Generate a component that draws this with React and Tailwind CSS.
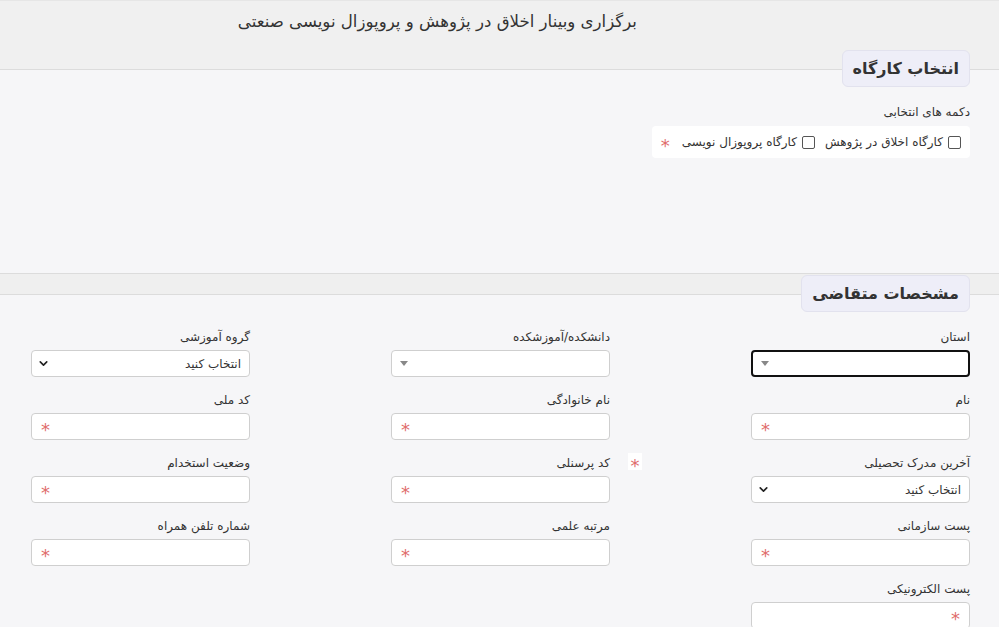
import { FiChevronDown } from 'react-icons/fi'

const Star = ({ className = '' }) => (
  <span className={`text-[#e06c6c] text-[18px] leading-none ${className}`}>*</span>
)

function Field({ label, type = 'text', focused = false, starRight = false, extraStar = false }) {
  return (
    <div className="flex flex-col">
      <div className="relative h-[18px] mb-[4px] text-[12px] leading-[18px] text-[#333]">
        {label}
        {extraStar && (
          <span className="absolute -right-[32px] top-[-1px] w-[14px] h-[17px] bg-white flex items-start justify-center pt-[4px]">
            <Star />
          </span>
        )}
      </div>
      {type === 'text' && (
        <div className={`h-[27px] bg-white border border-[#cfcfcf] rounded-[4px] flex items-center px-[9px] ${starRight ? 'justify-start' : 'justify-end'}`}>
          <Star className="mt-[7px]" />
        </div>
      )}
      {type === 'select' && (
        <div className="h-[27px] bg-white border border-[#cfcfcf] rounded-[4px] flex items-center justify-between pr-[8px] pl-[5px] text-[12px] text-[#333]">
          <span>انتخاب کنید</span>
          <FiChevronDown className="text-[13px] text-[#222]" strokeWidth={3} />
        </div>
      )}
      {type === 'select2' && (
        <div className={`h-[27px] bg-white rounded-[4px] flex items-center justify-end pl-[8px] ${focused ? 'border-2 border-[#111]' : 'border border-[#cfcfcf]'}`}>
          <span className="w-0 h-0 border-x-[4px] border-x-transparent border-t-[5px] border-t-[#888]" />
        </div>
      )}
    </div>
  )
}

function Pill({ children }) {
  return (
    <div className="relative z-10 bg-[#eeeef8] border border-[#e2e2ee] rounded-[6px] px-[10px] h-[37px] leading-[35px] text-[16px] font-bold text-[#333]">
      {children}
    </div>
  )
}

function Checkbox({ label }) {
  return (
    <label className="flex items-center gap-[5px] text-[12px] text-[#333]">
      <span className="w-[13px] h-[13px] border border-[#555] rounded-[2px] bg-white" />
      <span>{label}</span>
    </label>
  )
}

export default function App() {
  const rows = [
    [{ label: 'استان', type: 'select2', focused: true }, { label: 'دانشکده/آموزشکده', type: 'select2' }, { label: 'گروه آموزشی', type: 'select' }],
    [{ label: 'نام' }, { label: 'نام خانوادگی' }, { label: 'کد ملی' }],
    [{ label: 'آخرین مدرک تحصیلی', type: 'select' }, { label: 'کد پرسنلی', extraStar: true }, { label: 'وضعیت استخدام' }],
    [{ label: 'پست سازمانی' }, { label: 'مرتبه علمی' }, { label: 'شماره تلفن همراه' }],
    [{ label: 'پست الکترونیکی', starRight: true }],
  ]

  return (
    <div dir="rtl" className="min-h-screen bg-[#f6f6f8] font-['DejaVu_Sans',sans-serif] text-[#333] overflow-hidden">
      {/* Header */}
      <header className="h-[70px] bg-[#f0f0f0] border-t border-t-[#e6e6e6] border-b border-b-[#dcdcdc] pr-[362px] pt-[9px]">
        <h1 className="text-[16.6px] text-[#333] whitespace-nowrap">برگزاری وبینار اخلاق در پژوهش و پروپوزال نویسی صنعتی</h1>
      </header>

      {/* Workshop selection */}
      <section className="h-[203px] pr-[29px] flex flex-col items-start">
        <div className="-mt-[20px]">
          <Pill>انتخاب کارگاه</Pill>
        </div>
        <div className="mt-[16px] text-[12px] leading-[18px]">دکمه های انتخابی</div>
        <div className="mt-[5px] flex items-center gap-[10px] h-[32px] bg-white rounded-[4px] pr-[9px] pl-[9px]">
          <Checkbox label="کارگاه اخلاق در پژوهش" />
          <Checkbox label="کارگاه پروپوزال نویسی" />
          <Star className="mt-[7px] mr-[2px]" />
        </div>
      </section>

      <div className="h-[22px] bg-[#efefef] border-y border-[#dcdcdc]" />

      {/* Applicant info */}
      <section className="pr-[29px] pl-[31px] flex flex-col items-start">
        <div className="-mt-[20px]">
          <Pill>مشخصات متقاضی</Pill>
        </div>
        <div className="mt-[16px] grid grid-cols-3 gap-x-[141px] gap-y-[14px] w-full">
          {rows.flat().map((f) => (
            <Field key={f.label} {...f} />
          ))}
        </div>
      </section>
    </div>
  )
}
